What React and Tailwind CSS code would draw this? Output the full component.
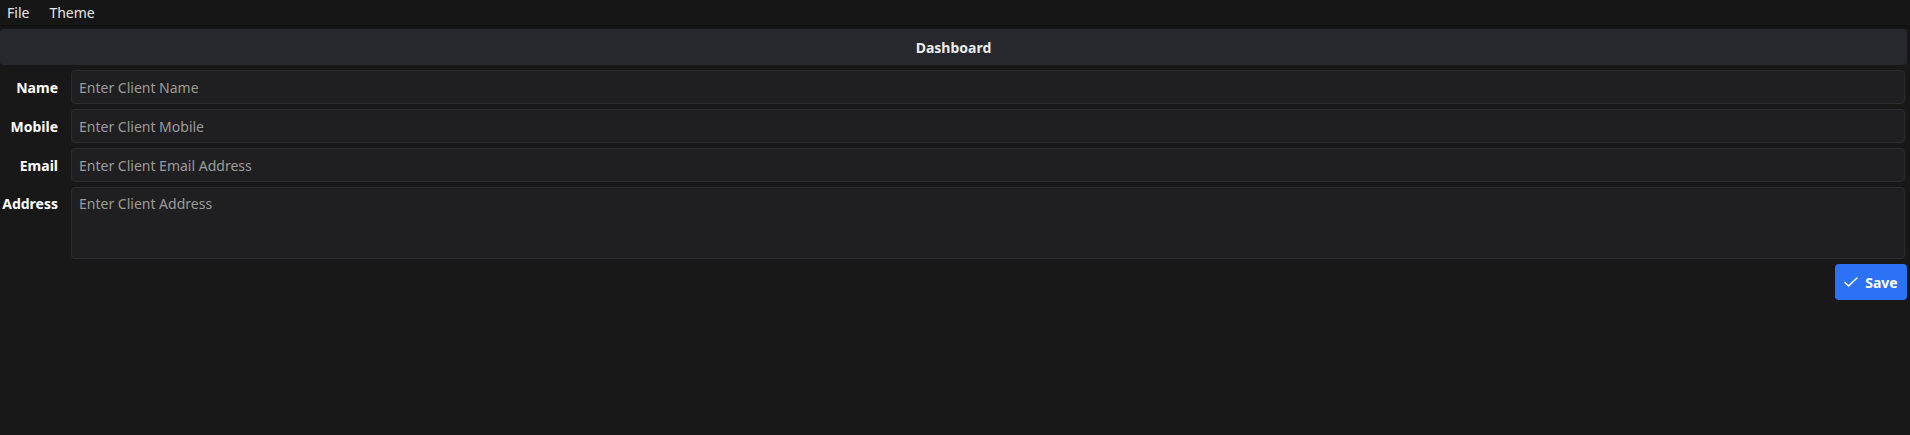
import React from 'react';

const fields = [
  { key: 'name', label: 'Name', placeholder: 'Enter Client Name' },
  { key: 'mobile', label: 'Mobile', placeholder: 'Enter Client Mobile' },
  { key: 'email', label: 'Email', placeholder: 'Enter Client Email Address' },
];

export default function App() {
  return (
    <div className="w-[1910px] h-[435px] bg-[#181819] text-[#f0f0f0] text-[14px] font-['Noto_Sans',sans-serif] flex flex-col">
      {/* Menu bar */}
      <div className="h-[25px] bg-[#161617] flex items-center gap-[20px] px-[7px] shadow-[0_2px_3px_rgba(0,0,0,0.4)]">
        <span className="text-[#e6e6e6]">File</span>
        <span className="text-[#e6e6e6]">Theme</span>
      </div>

      <div className="flex flex-col pt-[4px] pr-[3px]">
        {/* Header */}
        <div className="h-[36px] bg-[#27282d] rounded-[4px] flex items-center justify-center font-bold text-[#ececec]">
          Dashboard
        </div>

        {/* Form */}
        <div className="flex flex-col gap-[5px] mt-[5px]">
          {fields.map(f => (
            <div key={f.key} className="flex items-center gap-[13px]">
              <label className="w-[58px] text-right font-bold text-white">{f.label}</label>
              <input
                placeholder={f.placeholder}
                className="flex-1 mr-[2px] h-[34px] bg-[#1f1f21] border border-[#2c2c2f] rounded-[4px] px-[7px] text-[14px] placeholder:text-[#9b9b9b] outline-none"
              />
            </div>
          ))}
          <div className="flex items-start gap-[13px]">
            <label className="w-[58px] text-right font-bold text-white pt-[6px]">Address</label>
            <textarea
              placeholder="Enter Client Address"
              className="flex-1 mr-[2px] h-[72px] bg-[#1f1f21] border border-[#2c2c2f] rounded-[4px] px-[7px] py-[5px] text-[14px] placeholder:text-[#9b9b9b] outline-none resize-none"
            />
          </div>
        </div>

        {/* Save */}
        <div className="flex justify-end mt-[5px]">
          <button className="h-[36px] w-[72px] bg-[#2b72f6] rounded-[4px] flex items-center justify-center gap-[7px] font-bold text-white">
            <svg width="14" height="10" viewBox="0 0 14 10" fill="none" stroke="white" strokeWidth="1.6" strokeLinecap="round" strokeLinejoin="round">
              <path d="M1 5.5L4.5 9L13 1" />
            </svg>
            Save
          </button>
        </div>
      </div>
    </div>
  );
}
